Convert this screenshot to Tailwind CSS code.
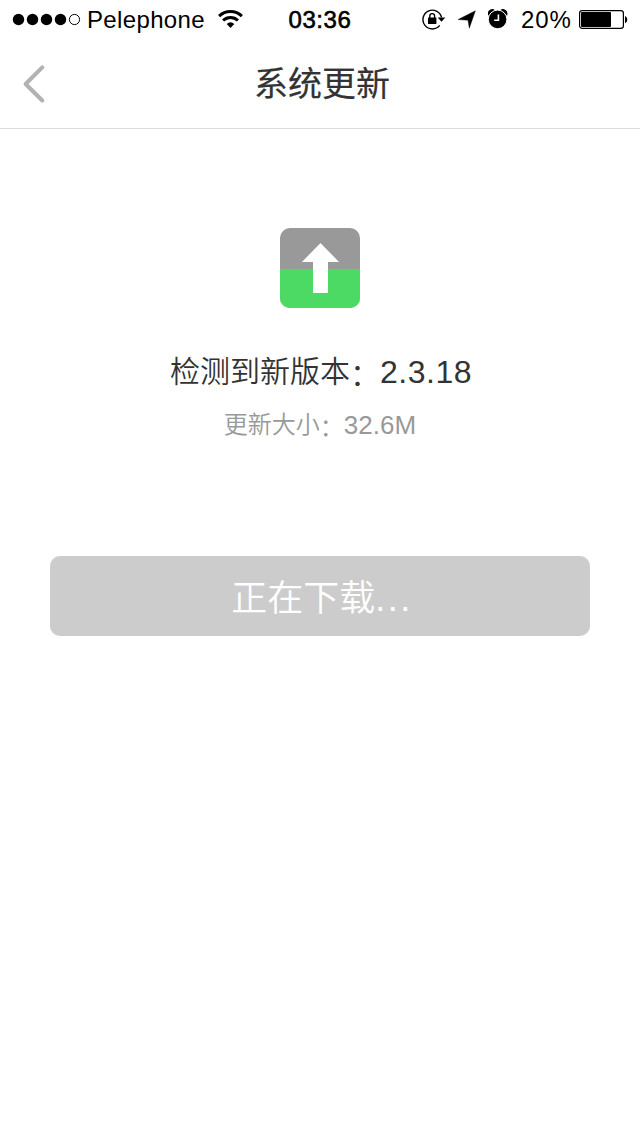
<!DOCTYPE html>
<html lang="zh-CN">
<head>
  <meta charset="UTF-8">
  <meta name="viewport" content="width=device-width, initial-scale=1">
  <title>系统更新</title>
  <!-- Tailwind CSS CDN -->
  <script src="https://cdn.jsdelivr.net/npm/@tailwindcss/browser@4"></script>
</head>
<body class="bg-white min-h-screen flex flex-col font-['Liberation_Sans','Noto_Sans_CJK_SC',sans-serif]">
  <!-- status bar -->
  <div class="h-10 grid grid-cols-3 items-center text-2xl leading-10 text-black whitespace-nowrap">
    <div class="flex items-center h-10 pl-3">
      <svg class="shrink-0" width="70" height="40" viewBox="0 0 70 40">
        <circle cx="6.5" cy="19.5" r="5.7"/>
        <circle cx="20.5" cy="19.5" r="5.7"/>
        <circle cx="34.5" cy="19.5" r="5.7"/>
        <circle cx="48.5" cy="19.5" r="5.7"/>
        <circle cx="62.5" cy="19.5" r="5.1" fill="none" stroke="#000" stroke-width="1"/>
      </svg>
      <span class="ml-[5px] w-[131px] shrink-0 tracking-[0.35px]">Pelephone</span>
      <svg class="shrink-0" width="26" height="40" viewBox="0 0 26 40">
        <g fill="none" stroke="#000" stroke-width="3">
          <path d="M1.1 16.1a16.3 16.3 0 0 1 22.8 0"/>
          <path d="M5.1 20.5a10.6 10.6 0 0 1 14.8 0"/>
        </g>
        <path d="M8.7 24a5.8 5.8 0 0 1 7.6 0L12.5 28z"/>
      </svg>
    </div>
    <div class="text-center tracking-[0.6px] [-webkit-text-stroke:0.6px_#000]">03:36</div>
    <div class="flex items-center justify-end h-10 pr-3">
      <svg class="-ml-px shrink-0" width="24" height="40" viewBox="0 0 24 40">
        <path d="M17.7 25.4A9.4 9.4 0 1 1 19.5 17.4" fill="none" stroke="#000" stroke-width="1.4"/>
        <path d="M15.7 17.6h7.6l-3.8 4.2z"/>
        <rect x="6" y="17.4" width="8.4" height="6.6" rx=".6"/>
        <path d="M7.8 18v-2a2.4 2.4 0 0 1 4.8 0v2" fill="none" stroke="#000" stroke-width="1.4"/>
      </svg>
      <svg class="ml-3 shrink-0" width="18" height="40" viewBox="0 0 18 40">
        <path d="M17.4 10.8L11.3 28.2 10 20.2 0 19.6z" stroke="#000" stroke-width=".4" stroke-linejoin="round"/>
      </svg>
      <svg class="ml-3 shrink-0" width="20" height="40" viewBox="0 0 20 40">
        <path d="M.5 14.8a4 4 0 0 1 6-4.4zM18.7 14.8a4 4 0 0 0-6-4.4z" stroke="#000" stroke-width="1.2"/>
        <circle cx="9.6" cy="19.4" r="9.3" stroke="#fff" stroke-width="1"/>
        <path d="M10.4 14.5v5.8H6.2" fill="none" stroke="#fff" stroke-width="1.6"/>
      </svg>
      <span class="ml-[13px] w-[58px] shrink-0 tracking-[0.9px]">20%</span>
      <svg class="-mr-[1px] shrink-0" width="50" height="40" viewBox="0 0 50 40">
        <rect x=".6" y="10.6" width="43.8" height="17.8" rx="2.6" fill="none" stroke="#000" stroke-width="1.2"/>
        <rect x="2" y="12" width="30" height="15" rx="1"/>
        <path d="M46 16c3 1.5 3 5.7 0 7.2z"/>
      </svg>
    </div>
  </div>

  <!-- nav bar -->
  <header class="h-[89px] grid grid-cols-3 items-center border-b border-[#dcdcdc]">
    <button class="ml-[22px] w-6" aria-label="返回">
      <svg width="24" height="40" viewBox="0 0 24 40">
        <path d="M20.3 3.3L3.6 20l16.7 16.5" fill="none" stroke="#b2b2b2" stroke-width="4" stroke-linecap="round" stroke-linejoin="round"/>
      </svg>
    </button>
    <h1 class="pl-1 text-center text-[34px] leading-[48px] font-normal text-[#333] [-webkit-text-stroke:0.2px_#333]">系统更新</h1>
  </header>

  <main class="flex flex-col items-center px-[50px]">
    <svg class="mt-[99px] shrink-0" width="80" height="80" viewBox="0 0 80 80">
      <rect width="80" height="80" rx="10" fill="#999"/>
      <path d="M0 41h80v29a10 10 0 0 1-10 10H10A10 10 0 0 1 0 70z" fill="#4cd964"/>
      <path d="M40.5 15L59 34H48v31H33V34H22z" fill="#fff"/>
    </svg>
    <p class="mt-10 h-12 pl-0.5 flex items-center text-3xl leading-[48px] text-[#333] font-[350]">
      <span>检测到新版本</span><span class="pt-1.5">：</span><span class="text-[32px] tracking-[0.5px]">2.3.18</span>
    </p>
    <p class="mt-[11px] h-9 flex items-center text-2xl leading-9 text-[#999] font-[350]">
      <span>更新大小</span><span class="pt-1.5">：</span><span class="text-[26px]">32.6M</span>
    </p>
    <button class="mt-[113px] w-full h-20 pt-1.5 pl-1 rounded-[10px] bg-[#ccc] text-white text-4xl font-[350]">正在下载<span class="tracking-[2.5px]">...</span></button>
  </main>
</body>
</html>
